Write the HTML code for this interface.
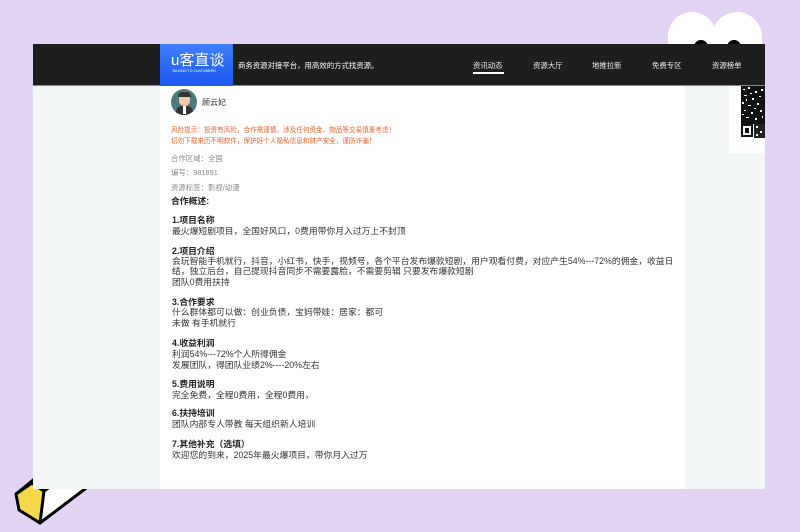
<!DOCTYPE html>
<html><head><meta charset="utf-8">
<style>
*{margin:0;padding:0;box-sizing:border-box}
body{width:800px;height:532px;background:#e3d3f4;position:relative;overflow:hidden;font-family:"Liberation Sans","Noto Sans CJK SC",sans-serif}
.a{position:absolute;white-space:nowrap}
.t{font-size:8.8px;color:#333;line-height:10px}
.b{font-size:8.8px;color:#222;font-weight:bold;line-height:10px}
.g{font-size:7.4px;color:#888}
.o{font-size:6.6px;color:#e8602c}
.nav{font-size:7.4px;color:#eee}
</style></head><body>
<!-- ghost -->
<div class="a" style="left:668px;top:12px;width:48px;height:60px;background:#fff;border-radius:24px 24px 0 0"></div>
<div class="a" style="left:712px;top:12px;width:50px;height:60px;background:#fff;border-radius:25px 25px 0 0"></div>
<div class="a" style="left:694px;top:40px;width:14px;height:10px;background:#000;border-radius:7px 7px 0 0"></div>
<div class="a" style="left:727px;top:40px;width:14px;height:10px;background:#000;border-radius:7px 7px 0 0"></div>
<!-- eraser (behind frame) -->
<svg class="a" style="left:0;top:440px" width="120" height="92" viewBox="0 440 120 92">
<polygon points="16,494 70,450 110,470 40,523" fill="#fff" stroke="#000" stroke-width="3" stroke-linejoin="round"/>
<polygon points="16,494 32,483 44,491 40,523 19,510" fill="#f5d94a" stroke="#000" stroke-width="3" stroke-linejoin="round"/>
<polygon points="32,483 80,448 92,456 44,491" fill="#fff" stroke="#000" stroke-width="3" stroke-linejoin="round"/>
<line x1="44" y1="491" x2="78" y2="465" stroke="#000" stroke-width="3"/>
</svg>
<!-- frame -->
<div class="a" style="left:33px;top:44px;width:732px;height:445px;background:#f2f6f7"></div>
<div class="a" style="left:160px;top:86px;width:525px;height:403px;background:#fff"></div>
<div class="a" style="left:729px;top:86px;width:36px;height:67px;background:#fff"></div>
<svg class="a" style="left:741px;top:86px" width="24" height="52" viewBox="0 0 24 52">
<rect x="0" y="0" width="24" height="38" fill="#111"/>
<g fill="#fff"><rect x="2" y="3" width="2" height="1"/><rect x="7" y="1" width="2" height="2"/><rect x="14" y="5" width="2" height="2"/><rect x="3" y="9" width="3" height="1"/><rect x="11" y="12" width="2" height="2"/><rect x="18" y="10" width="2" height="1"/><rect x="1" y="16" width="2" height="2"/><rect x="7" y="19" width="3" height="1"/><rect x="16" y="17" width="2" height="2"/><rect x="3" y="24" width="2" height="1"/><rect x="10" y="26" width="2" height="2"/><rect x="19" y="24" width="2" height="2"/><rect x="5" y="31" width="3" height="1"/><rect x="14" y="32" width="2" height="2"/><rect x="20" y="3" width="2" height="2"/><rect x="9" y="7" width="2" height="1"/><rect x="5" y="13" width="1" height="2"/><rect x="13" y="22" width="2" height="1"/><rect x="21" y="30" width="1" height="2"/><rect x="1" y="28" width="2" height="1"/></g>
<rect x="0" y="38" width="12" height="13" fill="#111"/><rect x="2" y="40" width="8" height="9" fill="#fff"/><rect x="4" y="42" width="4" height="5" fill="#111"/>
<rect x="13" y="38" width="11" height="14" fill="#222"/><rect x="15" y="40" width="2" height="2" fill="#fff"/><rect x="19" y="45" width="2" height="2" fill="#fff"/><rect x="15" y="48" width="2" height="2" fill="#fff"/>
</svg>
<!-- header -->
<div class="a" style="left:33px;top:44px;width:732px;height:42px;background:#1e1e1e"></div>
<div class="a" style="left:33px;top:85px;width:732px;height:1px;background:#888"></div>
<div class="a" style="left:160px;top:44px;width:73px;height:42px;background:linear-gradient(#3f7ff8,#1d57f0)"></div>
<div class="a" style="left:171px;top:49px;font-size:15px;color:#fff">u客直谈</div>
<div class="a" style="left:172px;top:69px;font-size:3.5px;color:#fff">TALKING TO CUSTOMERS</div>
<div class="a" style="left:238px;top:60px;font-size:7.4px;color:#fff">商务资源对接平台，用高效的方式找资源。</div>
<div class="a nav" style="left:473px;top:60px">资讯动态</div>
<div class="a" style="left:473px;top:72px;width:31px;height:1.5px;background:#fff"></div>
<div class="a nav" style="left:533px;top:60px">资源大厅</div>
<div class="a nav" style="left:592px;top:60px">地推拉新</div>
<div class="a nav" style="left:652px;top:60px">免费专区</div>
<div class="a nav" style="left:712px;top:60px">资源榜单</div>
<!-- avatar -->
<div class="a" style="left:171px;top:89px;width:26px;height:26px;border-radius:50%;background:#4d7a7e;overflow:hidden">
<div class="a" style="left:8px;top:4px;width:11px;height:13px;background:#f2c9a8;border-radius:5px"></div>
<div class="a" style="left:7px;top:3px;width:13px;height:5px;background:#333;border-radius:5px 5px 1px 1px"></div>
<div class="a" style="left:5px;top:17px;width:17px;height:10px;background:#333;border-radius:6px 6px 0 0"></div>
<div class="a" style="left:12px;top:17px;width:3px;height:8px;background:#fff"></div>
</div>
<div class="a" style="left:202px;top:97px;font-size:8px;color:#333">顾云妃</div>
<div class="a o" style="left:171px;top:124px">风险提示：投资有风险，合作需谨慎，涉及任何资金、物品等交易慎重考虑！</div>
<div class="a o" style="left:171px;top:135px">切勿下载来历不明软件，保护好个人隐私信息和财产安全，谨防诈骗！</div>
<div class="a g" style="left:171px;top:153px">合作区域：全国</div>
<div class="a g" style="left:171px;top:167px">编号：981891</div>
<div class="a g" style="left:171px;top:182px">资源标签：影视/动漫</div>
<div class="a b" style="left:171px;top:196px">合作概述:</div>
<div class="a b" style="left:172px;top:215px">1.项目名称</div>
<div class="a t" style="left:172px;top:226px">最火爆短剧项目，全国好风口，0费用带你月入过万上不封顶</div>
<div class="a b" style="left:172px;top:246px">2.项目介绍</div>
<div class="a t" style="left:172px;top:256px">会玩智能手机就行，抖音，小红书，快手，视频号，各个平台发布爆款短剧，用户观看付费，对应产生54%---72%的佣金，收益日</div>
<div class="a t" style="left:172px;top:266px">结，独立后台，自己提现抖音同步不需要露脸，不需要剪辑 只要发布爆款短剧</div>
<div class="a t" style="left:172px;top:277px">团队0费用扶持</div>
<div class="a b" style="left:172px;top:297px">3.合作要求</div>
<div class="a t" style="left:172px;top:307px">什么群体都可以做：创业负债，宝妈带娃：居家：都可</div>
<div class="a t" style="left:172px;top:318px">未做 有手机就行</div>
<div class="a b" style="left:172px;top:338px">4.收益利润</div>
<div class="a t" style="left:172px;top:349px">利润54%---72%个人所得佣金</div>
<div class="a t" style="left:172px;top:360px">发展团队，得团队业绩2%----20%左右</div>
<div class="a b" style="left:172px;top:379px">5.费用说明</div>
<div class="a t" style="left:172px;top:390px">完全免费，全程0费用，全程0费用，</div>
<div class="a b" style="left:172px;top:408px">6.扶持培训</div>
<div class="a t" style="left:172px;top:419px">团队内部专人带教 每天组织新人培训</div>
<div class="a b" style="left:172px;top:439px">7.其他补充（选填）</div>
<div class="a t" style="left:172px;top:450px">欢迎您的到来，2025年最火爆项目，带你月入过万</div>
</body></html>
